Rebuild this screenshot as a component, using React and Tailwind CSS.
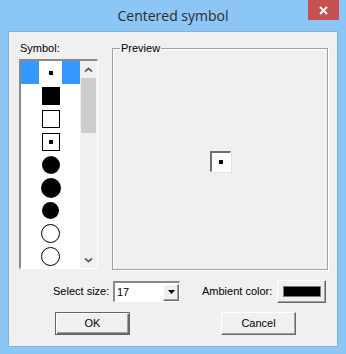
import React from "react";

// symbol kinds shown in the list, top to bottom
const symbols = ["dot", "square", "outline", "boxdot", "disc18", "disc20", "disc17", "ring", "ring"];

const Symbol = ({ kind }) => {
  if (kind === "dot") return <div className="w-[4px] h-[4px] bg-black" />;
  if (kind === "square") return <div className="w-[18px] h-[18px] bg-black" />;
  if (kind === "outline") return <div className="w-[18px] h-[18px] border border-black bg-white" />;
  if (kind === "boxdot")
    return (
      <div className="w-[18px] h-[18px] border border-black flex items-center justify-center">
        <div className="w-[4px] h-[4px] bg-black" />
      </div>
    );
  if (kind === "disc18") return <div className="w-[18px] h-[18px] rounded-full bg-black" />;
  if (kind === "disc20") return <div className="w-[20px] h-[20px] rounded-full bg-black" />;
  if (kind === "disc17") return <div className="w-[17px] h-[17px] rounded-full bg-black" />;
  return <div className="w-[19px] h-[19px] rounded-full border border-black bg-white" />;
};

const Chevron = ({ down }) => (
  <svg width="9" height="6" viewBox="0 0 9 6">
    <path
      d={down ? "M1 1.5 L4.5 4.5 L8 1.5" : "M1 4.5 L4.5 1.5 L8 4.5"}
      fill="none"
      stroke="#606060"
      strokeWidth="1.8"
    />
  </svg>
);

const SymbolList = () => (
  <div className="flex w-[79px] h-[210px] border-t-2 border-l-2 border-r border-b border-t-[#8a8a8a] border-l-[#8a8a8a] border-r-white border-b-white">
    <div className="w-[59px] flex flex-col bg-white overflow-hidden">
      {symbols.map((kind, i) => (
        <div key={i} className="flex h-[23px] shrink-0">
          <div className={`w-[18px] ${i === 0 ? "bg-[#3399ff]" : "bg-white"}`} />
          <div className="w-[23px] flex items-center justify-center bg-white">
            <Symbol kind={kind} />
          </div>
          <div className={`flex-1 ${i === 0 ? "bg-[#3399ff]" : "bg-white"}`} />
        </div>
      ))}
    </div>
    {/* scrollbar */}
    <div className="w-[17px] flex flex-col bg-[#f0f0f0]">
      <div className="h-[17px] flex items-center justify-center">
        <Chevron />
      </div>
      <div className="mx-[1px] h-[55px] bg-[#cdcdcd]" />
      <div className="flex-1" />
      <div className="h-[17px] flex items-center justify-center">
        <Chevron down />
      </div>
    </div>
  </div>
);

const raised =
  "border-t border-l border-r border-b border-t-white border-l-white border-r-[#696969] border-b-[#696969] shadow-[inset_-1px_-1px_0_#a0a0a0]";

export default function App() {
  return (
    <div className="w-[346px] h-[354px] bg-[#8cc6f5] flex flex-col px-[8px] pb-[7px] font-['Liberation_Sans',Arial,sans-serif] text-[11px] text-black">
      {/* title bar */}
      <div className="relative h-[31px] flex items-center justify-center">
        <span className="font-['Open_Sans',sans-serif] text-[14px] text-[#2b2b2b] -mt-[1px]">Centered symbol</span>
        <div className="absolute right-[-1px] top-0 w-[31px] h-[20px] bg-[#c75050] flex items-center justify-center">
          <svg width="9" height="9" viewBox="0 0 9 9">
            <path d="M1 1 L8 8 M8 1 L1 8" stroke="#fff" strokeWidth="2" />
          </svg>
        </div>
      </div>

      {/* client area */}
      <div className="flex-1 bg-[#f0f0f0] border border-[#7db3e3] pt-[9px] pl-[10px] flex flex-col">
        <div className="flex items-start">
          <div className="flex flex-col">
            <span className="ml-[1px] leading-[14px]">Symbol:</span>
            <div className="mt-[4px]">
              <SymbolList />
            </div>
          </div>

          <fieldset className="ml-[14px] w-[216px] h-[229px] border border-[#a0a0a0] shadow-[inset_1px_1px_0_#fff,1px_1px_0_#fff]">
            <legend className="ml-[7px] px-[1px] leading-[14px] bg-[#f0f0f0]">Preview</legend>
            <div className="h-[213px] flex items-center justify-center">
              <div className="w-[21px] h-[21px] flex items-center justify-center bg-white border-t-2 border-l-2 border-r border-b border-t-[#6f6f6f] border-l-[#6f6f6f] border-r-white border-b-white shadow-[1px_1px_0_#e3e3e3]">
                <div className="w-[4px] h-[4px] bg-black" />
              </div>
            </div>
          </fieldset>
        </div>

        {/* size / colour row */}
        <div className="mt-[10px] ml-[34px] flex items-center h-[23px]">
          <span className="w-[60px]">Select size:</span>
          <div className="w-[67px] h-[21px] flex items-center bg-white border-t-2 border-l-2 border-r border-b border-t-[#8a8a8a] border-l-[#8a8a8a] border-r-white border-b-white">
            <span className="flex-1 pl-[2px]">17</span>
            <div className={`w-[16px] h-[17px] flex items-center justify-center bg-[#f0f0f0] ${raised}`}>
              <svg width="7" height="4" viewBox="0 0 7 4">
                <path d="M0 0 H7 L3.5 4 Z" fill="#000" />
              </svg>
            </div>
          </div>
          <span className="ml-[22px] w-[75px]">Ambient color:</span>
          <div className={`w-[49px] h-[23px] flex items-center justify-center ${raised}`}>
            <div className="w-[38px] h-[11px] bg-black border border-[#7a7a7a]" />
          </div>
        </div>

        {/* buttons */}
        <div className="mt-[9px] ml-[36px] flex items-center">
          <button className="w-[75px] h-[23px] border border-[#646464] shadow-[inset_1px_1px_0_#fff,inset_-1px_-1px_0_#696969,inset_-2px_-2px_0_#a0a0a0] text-[11px] leading-none">
            OK
          </button>
          <button className={`ml-[91px] w-[75px] h-[23px] text-[11px] leading-none ${raised}`}>Cancel</button>
        </div>
      </div>
    </div>
  );
}
